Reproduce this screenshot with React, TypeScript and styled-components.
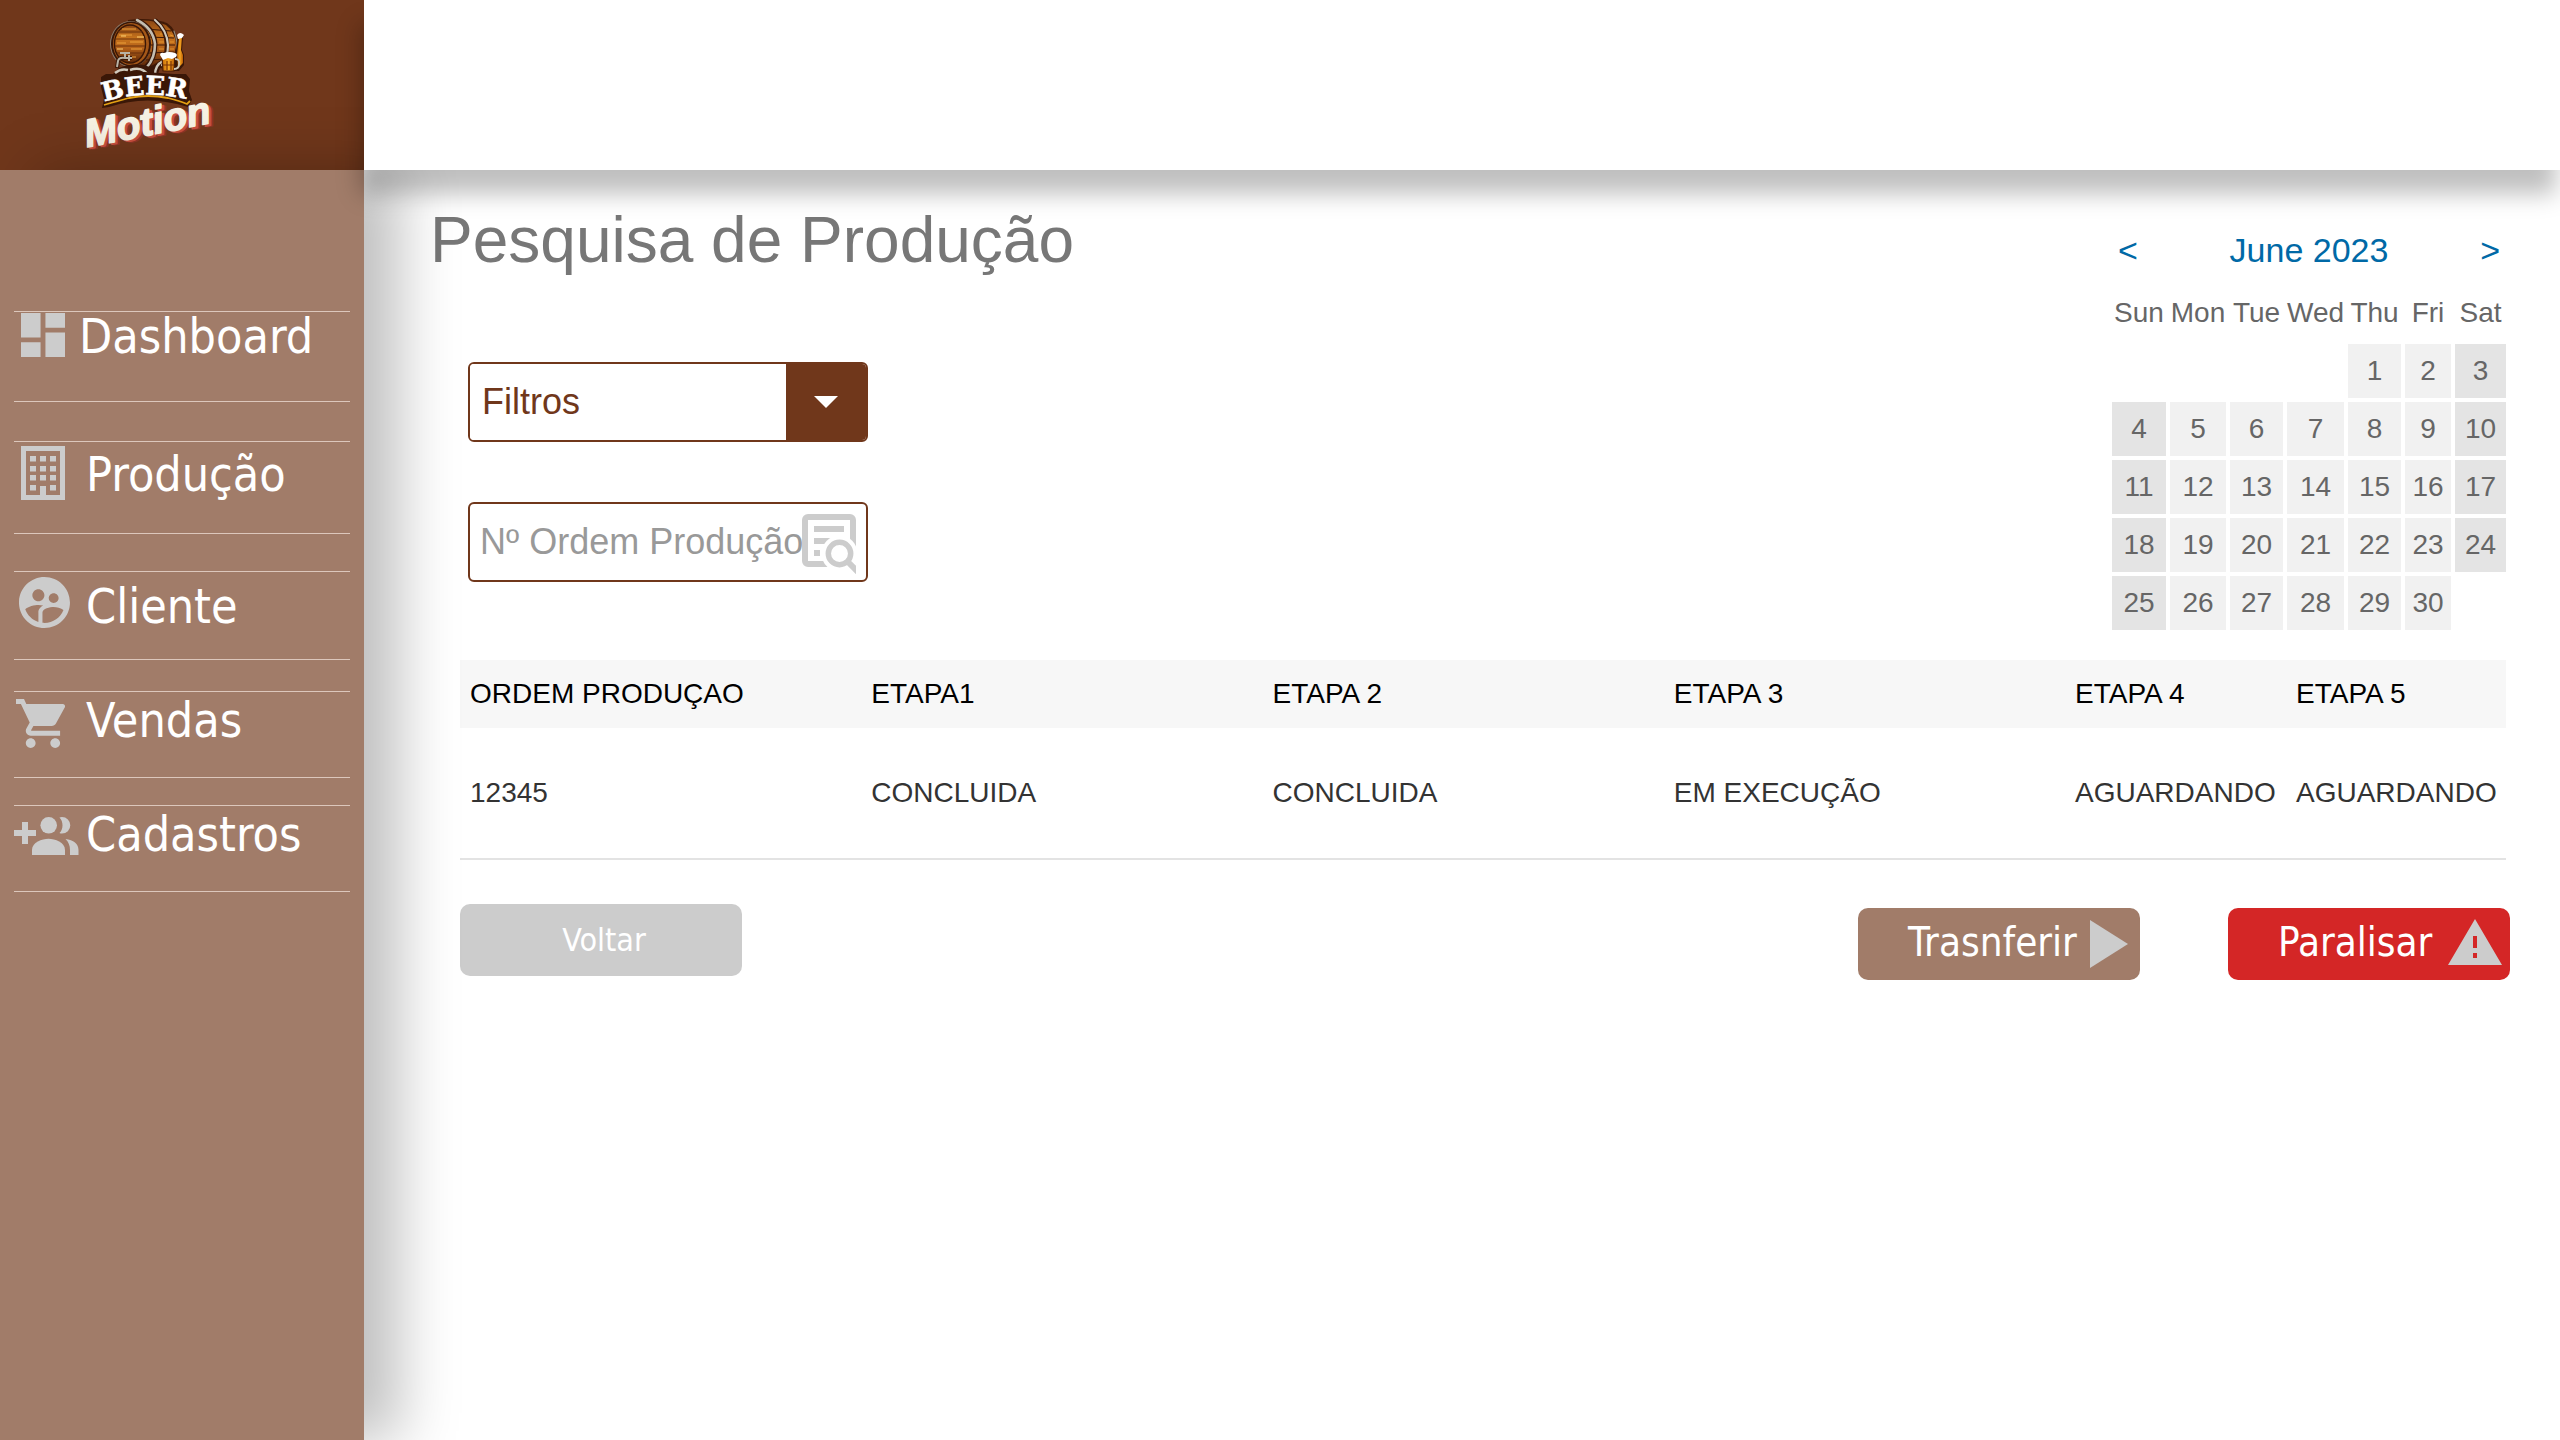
import React from "react";
import styled, { createGlobalStyle } from "styled-components";

const brown = "#70371b";
const clay = "#a17c69";
const iconGrey = "#cccccc";
const sans = '"Liberation Sans", Arial, sans-serif';
const menuFont = 'Tahoma, "DejaVu Sans Condensed", "DejaVu Sans", sans-serif';

const GlobalStyle = createGlobalStyle`
  *, *::before, *::after { box-sizing: border-box; }
  body { margin: 0; background: #fff; font-family: ${sans}; }
  button, input, select { font: inherit; }
`;

const Page = styled.div`
  display: grid;
  grid-template-columns: 364px 1fr;
  grid-template-rows: 170px 1fr;
  min-height: 100vh;
`;

const Brand = styled.div`
  background: ${brown};
  padding: 11px 0 0 80px;
`;

const TopBar = styled.header`
  position: relative;
  z-index: 2;
  background: #fff;
  box-shadow: -4px 24px 22px rgba(0, 0, 0, 0.25);
`;

const Sidebar = styled.nav`
  position: relative;
  z-index: 1;
  background: ${clay};
  box-shadow: 35px 0 55px rgba(0, 0, 0, 0.25);
  padding: 141px 14px 0;
`;

const Menu = styled.ul`
  list-style: none;
  margin: 0;
  padding: 0;
  display: grid;
  grid-template-rows: 130px 130px 120px 114px 88px;
  align-items: start;
`;

const MenuLink = styled.a<{ $height: number; $drop: number; $iconRow: number; $inset: number; $slot: number }>`
  display: grid;
  grid-template-columns: ${(p) => p.$slot}px 1fr;
  align-items: start;
  height: ${(p) => p.$height}px;
  border-top: 1px solid #dcc7bc;
  border-bottom: 1px solid #dcc7bc;
  color: #fff;
  font-family: ${menuFont};
  font-size: 48px;
  line-height: 48px;
  text-decoration: none;
  white-space: nowrap;

  > span:first-child {
    display: flex;
    align-items: center;
    height: ${(p) => p.$iconRow}px;
    padding-left: ${(p) => p.$inset}px;
  }
  > span:last-child {
    padding-top: ${(p) => p.$drop}px;
  }
  svg { flex: none; }
`;

const Main = styled.main`
  padding: 34px 50px 40px 66px;
`;

const Upper = styled.section`
  display: flex;
  justify-content: space-between;
  align-items: flex-start;
  padding-right: 2px;
`;

const Title = styled.h1`
  margin: 0 0 86px;
  font-size: 64px;
  line-height: 72px;
  font-weight: 400;
  color: #777;
`;

const Filters = styled.form`
  display: grid;
  gap: 60px;
  width: 400px;
  margin-left: 38px;
`;

const Field = styled.label`
  display: flex;
  height: 80px;
  border: 2px solid ${brown};
  border-radius: 6px;
  background: #fff;
  overflow: hidden;
  font-size: 36px;
`;

const FilterSelect = styled.select`
  flex: 1;
  min-width: 0;
  appearance: none;
  border: 0;
  outline: 0;
  padding: 0 12px 2px;
  background: #fff;
  color: ${brown};
`;

const Arrow = styled.span`
  display: grid;
  place-items: center;
  width: 80px;
  background: ${brown};
`;

const OrderInput = styled.input`
  flex: 1;
  min-width: 0;
  border: 0;
  outline: 0;
  padding: 0 0 0 10px;
  background: transparent;
  color: #333;
  &::placeholder { color: #999; opacity: 1; }
`;

const SearchButton = styled.button`
  display: flex;
  border: 0;
  padding: 10px 10px 0 0;
  background: transparent;
`;

const Calendar = styled.section`
  width: 398px;
  padding-top: 26px;
`;

const CalendarBar = styled.div`
  display: flex;
  justify-content: space-between;
  height: 66px;
  padding: 0 8px;
  color: #0069a6;
  font-size: 34px;
  line-height: 40px;
`;

const MonthButton = styled.button`
  border: 0;
  padding: 0;
  height: 40px;
  background: none;
  color: inherit;
`;

const Days = styled.table`
  width: 100%;
  table-layout: fixed;
  border-collapse: separate;
  border-spacing: 0;
  color: #666;
  font-size: 28px;
  line-height: 32px;

  th {
    height: 46px;
    padding: 1px 0 0;
    font-weight: 400;
    vertical-align: top;
    white-space: nowrap;
  }
`;

const Day = styled.td<{ $tone: string }>`
  height: 58px;
  padding: 0;
  border: 2px solid transparent;
  background: ${(p) => p.$tone} padding-box;
  text-align: center;
`;

const OrdersWrap = styled.div`
  padding: 28px 4px 0 30px;
`;

const Orders = styled.table`
  width: 100%;
  table-layout: fixed;
  border-collapse: separate;
  border-spacing: 0;
  text-align: left;
  font-size: 28px;
  line-height: 32px;
  white-space: nowrap;

  col:nth-child(5) { width: 221px; }
  col:nth-child(6) { width: 220px; }
  th, td { padding: 0 10px; }
  th { height: 68px; background: #f7f7f7; color: #000; font-weight: 400; }
  td { height: 132px; border-bottom: 2px solid #e3e3e3; color: #333; }
`;

const Actions = styled.div`
  display: flex;
  justify-content: space-between;
  padding: 44px 0 0 30px;
`;

const ActionGroup = styled.div`
  display: flex;
  gap: 88px;
  padding-top: 4px;
`;

const Action = styled.button<{ $tone: string }>`
  display: flex;
  align-items: center;
  justify-content: space-between;
  width: 282px;
  height: 72px;
  border: 0;
  border-radius: 10px;
  padding: 0 8px 4px 50px;
  background: ${(p) => p.$tone};
  color: #fff;
  font-family: ${menuFont};
  font-size: 40px;
  line-height: 44px;
`;

const BackAction = styled(Action)`
  justify-content: center;
  padding: 0 0 0 6px;
  font-size: 32px;
`;

const PlaySlot = styled.span`
  display: flex;
  padding: 4px 4px 0 0;
`;

const Logo = () => (
  <svg width="140" height="145" viewBox="80 10 140 145" role="img" aria-label="Beer Motion">
    <defs>
      <linearGradient id="wood" x1="0" y1="0" x2="0" y2="1">
        <stop offset="0" stopColor="#8a4513" />
        <stop offset=".35" stopColor="#c8751d" />
        <stop offset=".6" stopColor="#b5621a" />
        <stop offset="1" stopColor="#5c2607" />
      </linearGradient>
      <linearGradient id="beer" x1="0" y1="0" x2="1" y2="0">
        <stop offset="0" stopColor="#c46a05" />
        <stop offset=".5" stopColor="#f5a623" />
        <stop offset="1" stopColor="#b85a04" />
      </linearGradient>
      <path id="beerArc" d="M104 101 Q147 87 194 100" />
    </defs>
    <path d="M128 19 Q150 16 167 22 Q178 29 178 45 Q177 60 168 66 L132 66Z" fill="#401a07" />
    <path d="M136 20 Q151 18 166 24 Q176 32 176 45 Q174 58 166 64 L138 65Z" fill="url(#wood)" />
    <g stroke="#3d1706" strokeWidth="1.2" fill="none">
      <path d="M146 28 L171 30M149 36 L174 37M149 44 L175 44M149 52 L174 51M146 59 L169 58" />
    </g>
    <g stroke="#e89a30" strokeWidth=".9" fill="none">
      <path d="M147 25 L149 26M160 33 L164 33M170 34 L173 35M159 41 L164 41M170 41 L174 41M159 48 L164 48M170 48 L174 48" />
    </g>
    <g fill="none" strokeLinecap="round">
      <path d="M138 20 Q154 27 155 43 Q155 58 146 66" stroke="#3a1707" strokeWidth="5" />
      <path d="M137 19 Q153 27 155 43 Q155 57 147 66" stroke="#c4beb1" strokeWidth="2.6" />
      <path d="M156 20 Q167 29 167 44 Q167 57 161 65" stroke="#3a1707" strokeWidth="4.500" />
      <path d="M155 19 Q167 29 168 44 Q168 56 162 64" stroke="#cfc9bc" strokeWidth="2.2" />
      <path d="M174 30 Q178 40 177 52" stroke="#8f887b" strokeWidth="1.2" />
    </g>
    <ellipse cx="130.500" cy="43" rx="20.500" ry="23" fill="#8c7f70" />
    <ellipse cx="131" cy="43" rx="20" ry="22.500" fill="#3a1707" />
    <ellipse cx="131" cy="43" rx="18" ry="21" fill="#a55818" />
    <ellipse cx="130" cy="43" rx="15.500" ry="19" fill="url(#wood)" stroke="#3a1707" strokeWidth="1.400" />
    <path d="M118 31H142M115 38H145M115 45H145M117 52H143" stroke="#6b300d" strokeWidth="1" />
    <path d="M122 28H136M119 34H132M130 41H143M117 42H126M131 48H142M125 56H136" stroke="#eca13a" strokeWidth="1" />
    <path d="M137 36H144M117 48H123M121 35H126" stroke="#ffd071" strokeWidth="1" />
    <path d="M112 74 L119 67 Q136 60 150 66 L163 58 L157 76 H112Z" fill="#3a1707" />
    <path d="M115 72 Q121 67 128 69 M130 69 Q142 65 148 74 M163 60 Q155 64 155 74" fill="none" stroke="#cfc9bc" strokeWidth="2.500" />
    <path d="M117 67 L118 60 Q119 56 125 57 L132 57" fill="none" stroke="#3a1707" strokeWidth="4" />
    <path d="M117 66 L118 60 Q119 56 125 57 L132 57 M125 56 V52 M120 52 H130 M129 54V60" fill="none" stroke="#b9b3a6" strokeWidth="2" />
    <path d="M178 36 H183 L182 49 L184 54 V64 L179 70 H174 L176 50Z" fill="#3a1707" />
    <path d="M179 37 H182 L181 49 L183 54 V62 L178 67 L177 53Z" fill="url(#beer)" />
    <path d="M177 34 Q180 30 184 34 L182 37 L178 38Z" fill="#fff" />
    <path d="M162 55 H175 L174 70 H163Z" fill="url(#beer)" stroke="#4a1d06" strokeWidth="1.200" />
    <path d="M167 60V69M171 60V69M163 64H174" stroke="#7c3405" strokeWidth="1.200" />
    <path d="M175 58 Q180 58 179 63 Q179 68 174 68" fill="none" stroke="#cfc9bc" strokeWidth="1.800" />
    <path d="M160 54 Q160 51 164 52 Q169 50 175 52 Q178 53 176 56 L172 58 L168 57 L163 59Z" fill="#fff" />
    <path d="M101 76 L106 73 H120 L145 71 L174 73 H186 L190 78 L189 90 L192 99 L188 106 Q147 93 109 106 L102 107 L104 98 L101 86Z" fill="#3a1707" />
    <path d="M104 104 Q125 98 129 97 Q148 93 168 97 Q180 100 187 103 L190 100" fill="none" stroke="#e3a013" strokeWidth="1.800" />
    <text fontFamily='"DejaVu Serif", serif' fontWeight="700" fontSize="26" fill="#fff" stroke="#fff" strokeWidth="0.6">
      <textPath href="#beerArc">BEER</textPath>
    </text>
    <g transform="rotate(-11 88 146)" fontFamily='"Liberation Sans", Arial, sans-serif' fontWeight="700" fontStyle="italic" fontSize="39" strokeLinejoin="round" strokeWidth="1.5">
      <text x="91" y="149" fill="#8b3629" stroke="#8b3629">Motion</text>
      <text x="89" y="148" fill="#c9503f" stroke="#c9503f">Motion</text>
      <text x="87" y="146" fill="#f7f2e4" stroke="#f7f2e4">Motion</text>
    </g>
  </svg>
);

const DashboardIcon = () => (
  <svg width="44" height="44" viewBox="3 3 18 18" fill={iconGrey}>
    <path d="M3 13h8V3H3v10zm0 8h8v-6H3v6zm10 0h8V11h-8v10zm0-18v6h8V3h-8z" />
  </svg>
);

const FactoryIcon = () => (
  <svg width="44" height="54" viewBox="0 0 44 54" fill={iconGrey}>
    <path fillRule="evenodd" d="M0 0H44V54H0ZM5 5V49H19V40H25V49H39V5Z" />
    {[10, 20, 29, 39].map((y) =>
      [9, 19, 29].map((x) => (y === 39 && x === 19 ? null : <rect key={`${x}-${y}`} x={x} y={y} width="6" height="5.5" />))
    )}
  </svg>
);

const ClientIcon = () => (
  <svg width="51" height="51" viewBox="2 2 20 20" fill={iconGrey}>
    <path d="M11.99 2c-5.52 0-10 4.48-10 10s4.48 10 10 10 10-4.48 10-10-4.48-10-10-10zm3.61 6.34c1.07 0 1.93.86 1.93 1.93s-.86 1.93-1.93 1.93-1.93-.86-1.93-1.93c-.01-1.07.86-1.93 1.93-1.93zm-6-1.58c1.3 0 2.36 1.06 2.36 2.36s-1.06 2.36-2.36 2.36-2.36-1.06-2.36-2.36c0-1.31 1.05-2.36 2.36-2.36zm0 9.13v3.75c-2.4-.75-4.3-2.6-5.14-4.96 1.05-1.12 3.67-1.69 5.14-1.69.53 0 1.2.08 1.9.22-1.64.87-1.9 2.02-1.9 2.68zM11.99 20c-.27 0-.53-.01-.79-.04v-4.07c0-1.42 2.94-2.13 4.4-2.13 1.07 0 2.92.39 3.84 1.15-1.17 2.97-4.06 5.09-7.45 5.09z" />
  </svg>
);

const CartIcon = () => (
  <svg width="49" height="49" viewBox="1 2 20 20" fill={iconGrey}>
    <path d="M7 18c-1.1 0-1.99.9-1.99 2S5.9 22 7 22s2-.9 2-2-.9-2-2-2zM1 2v2h2l3.6 7.59-1.35 2.45c-.16.28-.25.61-.25.96 0 1.1.9 2 2 2h12v-2H7.42c-.14 0-.25-.11-.25-.25l.03-.12.9-1.63h7.45c.75 0 1.41-.41 1.75-1.03l3.58-6.49A1.003 1.003 0 0020 4H5.21l-.94-2H1zm16 16c-1.1 0-1.99.9-1.99 2s.89 2 1.99 2 2-.9 2-2-.9-2-2-2z" />
  </svg>
);

const GroupAddIcon = () => (
  <svg width="65" height="38" viewBox="0 0 65 38" fill={iconGrey}>
    <path d="M8 5h6v8h8v6h-8v8H8v-8H0v-6h8z" />
    <circle cx="34.700" cy="8.300" r="8.300" />
    <path d="M18 38v-5c0-8 10-11.300 16.500-11.300S51 25 51 33v5z" />
    <path d="M45.500.500Q46.500 0 48 0a8.300 8.300 0 0 1 0 16.600q-1.500 0-2.500-.500c4-4 4-11.500 0-15.600zM51.500 22c8 .800 13 5 13 11v5H56v-5c0-4.500-1.500-8-4.500-11z" />
  </svg>
);

const SearchDocIcon = () => (
  <svg width="54" height="60" viewBox="0 0 54 60">
    <rect x="3" y="3" width="48" height="47" rx="3" fill="none" stroke={iconGrey} strokeWidth="6" />
    <path d="M12 12h30v6H12zM12 24h18v6H12zM12 36h6v6h-6z" fill={iconGrey} />
    <path d="M37.500 39.500 L60 62" stroke="#fff" strokeWidth="14" />
    <circle cx="37.500" cy="39.500" r="18" fill="#fff" />
    <circle cx="37.500" cy="39.500" r="11.200" fill="none" stroke={iconGrey} strokeWidth="5.500" />
    <path d="M45.500 47.500 L58 60" stroke={iconGrey} strokeWidth="6" />
  </svg>
);

const PlayIcon = () => (
  <svg width="38" height="48" viewBox="0 0 38 48">
    <path d="M0 0L38 24L0 48Z" fill={iconGrey} />
  </svg>
);

const WarningIcon = () => (
  <svg width="54" height="46" viewBox="0 0 54 46">
    <path fillRule="evenodd" d="M27 0L54 46H0ZM25 17V29H29V17ZM25 34V39H29V34Z" fill={iconGrey} />
  </svg>
);

const menu = [
  { label: "Dashboard", icon: <DashboardIcon />, height: 91, drop: 0, iconRow: 46, inset: 7, slot: 65 },
  { label: "Produção", icon: <FactoryIcon />, height: 93, drop: 8, iconRow: 62, inset: 7, slot: 72 },
  { label: "Cliente", icon: <ClientIcon />, height: 89, drop: 10, iconRow: 60, inset: 5, slot: 72 },
  { label: "Vendas", icon: <CartIcon />, height: 87, drop: 4, iconRow: 62, inset: 2, slot: 72 },
  { label: "Cadastros", icon: <GroupAddIcon />, height: 87, drop: 4, iconRow: 60, inset: 0, slot: 72 },
];

const weekdays = ["Sun", "Mon", "Tue", "Wed", "Thu", "Fri", "Sat"];
const dayWidths = [58, 60, 57, 61, 57, 50, 55];
const weeks = Array.from({ length: 5 }, (_, w) =>
  Array.from({ length: 7 }, (_, d) => {
    const n = w * 7 + d - 3;
    return n >= 1 && n <= 30 ? n : null;
  })
);

const dayTone = (n: number | null, column: number) => {
  if (n === null) return "transparent";
  return column === 0 || column === 6 ? "#e4e4e4" : "#f1f1f1";
};

const headings = ["ORDEM PRODUÇAO", "ETAPA1", "ETAPA 2", "ETAPA 3", "ETAPA 4", "ETAPA 5"];
const orders = [["12345", "CONCLUIDA", "CONCLUIDA", "EM EXECUÇÃO", "AGUARDANDO", "AGUARDANDO"]];

export default function App() {
  return (
    <>
      <GlobalStyle />
      <Page>
        <Brand>
          <Logo />
        </Brand>
        <TopBar />
        <Sidebar aria-label="Menu">
          <Menu>
            {menu.map((m) => (
              <li key={m.label}>
                <MenuLink href="#" $height={m.height} $drop={m.drop} $iconRow={m.iconRow} $inset={m.inset} $slot={m.slot}>
                  <span>{m.icon}</span>
                  <span>{m.label}</span>
                </MenuLink>
              </li>
            ))}
          </Menu>
        </Sidebar>
        <Main>
          <Upper>
            <div>
              <Title>Pesquisa de Produção</Title>
              <Filters onSubmit={(e) => e.preventDefault()}>
                <Field>
                  <FilterSelect aria-label="Filtros" defaultValue="Filtros">
                    <option>Filtros</option>
                  </FilterSelect>
                  <Arrow>
                    <svg width="24" height="12" viewBox="0 0 24 12">
                      <path d="M0 0H24L12 12Z" fill="#fff" />
                    </svg>
                  </Arrow>
                </Field>
                <Field>
                  <OrderInput type="text" placeholder="Nº Ordem Produção" aria-label="Nº Ordem Produção" />
                  <SearchButton type="submit" aria-label="Pesquisar">
                    <SearchDocIcon />
                  </SearchButton>
                </Field>
              </Filters>
            </div>
            <Calendar>
              <CalendarBar>
                <MonthButton type="button" aria-label="Previous month">&lt;</MonthButton>
                <span>June 2023</span>
                <MonthButton type="button" aria-label="Next month">&gt;</MonthButton>
              </CalendarBar>
              <Days>
                <colgroup>
                  {dayWidths.map((w, i) => (
                    <col key={i} width={w} />
                  ))}
                </colgroup>
                <thead>
                  <tr>
                    {weekdays.map((d) => (
                      <th key={d} scope="col">{d}</th>
                    ))}
                  </tr>
                </thead>
                <tbody>
                  {weeks.map((week, w) => (
                    <tr key={w}>
                      {week.map((n, d) => (
                        <Day key={d} $tone={dayTone(n, d)}>{n}</Day>
                      ))}
                    </tr>
                  ))}
                </tbody>
              </Days>
            </Calendar>
          </Upper>
          <OrdersWrap>
            <Orders>
              <colgroup>
                {headings.map((h) => (
                  <col key={h} />
                ))}
              </colgroup>
              <thead>
                <tr>
                  {headings.map((h) => (
                    <th key={h} scope="col">{h}</th>
                  ))}
                </tr>
              </thead>
              <tbody>
                {orders.map((row) => (
                  <tr key={row[0]}>
                    {row.map((cell, i) => (
                      <td key={i}>{cell}</td>
                    ))}
                  </tr>
                ))}
              </tbody>
            </Orders>
          </OrdersWrap>
          <Actions>
            <BackAction type="button" $tone={iconGrey}>Voltar</BackAction>
            <ActionGroup>
              <Action type="button" $tone={clay}>
                Trasnferir
                <PlaySlot>
                  <PlayIcon />
                </PlaySlot>
              </Action>
              <Action type="button" $tone="#d42626">
                Paralisar
                <WarningIcon />
              </Action>
            </ActionGroup>
          </Actions>
        </Main>
      </Page>
    </>
  );
}
